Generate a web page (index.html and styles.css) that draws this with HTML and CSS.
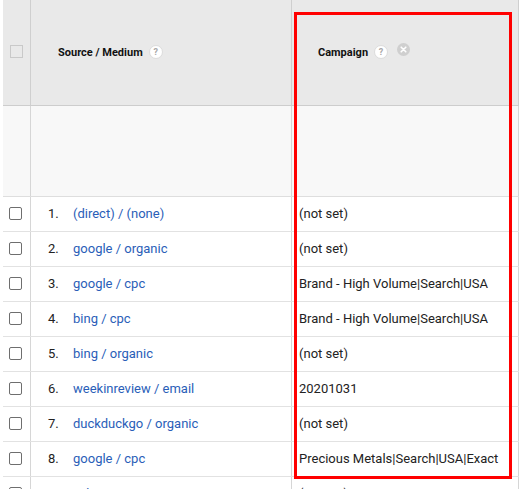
FILE: index.html
```html
<!DOCTYPE html>
<html>
<head>
<meta charset="utf-8">
<link rel="stylesheet" href="styles.css">
</head>
<body>
<div class="report">
  <div class="table">
    <div class="row head">
      <div class="cell chk"><span class="box-head"></span></div>
      <div class="cell hcell src"><span class="htext">Source / Medium</span><span class="help">?</span></div>
      <div class="cell hcell camp"><span class="htext">Campaign</span><span class="help">?</span><span class="close"><svg width="13" height="13" viewBox="0 0 13 13"><circle cx="6.5" cy="6.5" r="6.5" fill="#cfcfcf"/><path d="M4.2 4.2 L8.8 8.8 M8.8 4.2 L4.2 8.8" stroke="#fff" stroke-width="1.6" stroke-linecap="round"/></svg></span></div>
    </div>
    <div class="row sub">
      <div class="cell chk"></div>
      <div class="cell"></div>
      <div class="cell"></div>
    </div>
    <div class="row data">
      <div class="cell chk"><span class="box"></span></div>
      <div class="cell dsrc"><span class="num">1.</span><a class="link">(direct) / (none)</a></div>
      <div class="cell dcamp">(not set)</div>
    </div>
    <div class="row data">
      <div class="cell chk"><span class="box"></span></div>
      <div class="cell dsrc"><span class="num">2.</span><a class="link">google / organic</a></div>
      <div class="cell dcamp">(not set)</div>
    </div>
    <div class="row data">
      <div class="cell chk"><span class="box"></span></div>
      <div class="cell dsrc"><span class="num">3.</span><a class="link">google / cpc</a></div>
      <div class="cell dcamp">Brand - High Volume|Search|USA</div>
    </div>
    <div class="row data">
      <div class="cell chk"><span class="box"></span></div>
      <div class="cell dsrc"><span class="num">4.</span><a class="link">bing / cpc</a></div>
      <div class="cell dcamp">Brand - High Volume|Search|USA</div>
    </div>
    <div class="row data">
      <div class="cell chk"><span class="box"></span></div>
      <div class="cell dsrc"><span class="num">5.</span><a class="link">bing / organic</a></div>
      <div class="cell dcamp">(not set)</div>
    </div>
    <div class="row data">
      <div class="cell chk"><span class="box"></span></div>
      <div class="cell dsrc"><span class="num">6.</span><a class="link">weekinreview / email</a></div>
      <div class="cell dcamp">20201031</div>
    </div>
    <div class="row data">
      <div class="cell chk"><span class="box"></span></div>
      <div class="cell dsrc"><span class="num">7.</span><a class="link">duckduckgo / organic</a></div>
      <div class="cell dcamp">(not set)</div>
    </div>
    <div class="row data">
      <div class="cell chk"><span class="box"></span></div>
      <div class="cell dsrc"><span class="num">8.</span><a class="link">google / cpc</a></div>
      <div class="cell dcamp">Precious Metals|Search|USA|Exact</div>
    </div>
    <div class="row data">
      <div class="cell chk"><span class="box"></span></div>
      <div class="cell dsrc"><span class="num">9.</span><a class="link">yahoo / organic</a></div>
      <div class="cell dcamp">(not set)</div>
    </div>
  </div>
  <div class="highlight"></div>
</div>
</body>
</html>
```

FILE: styles.css
```css
* { box-sizing: border-box; }
html, body { margin: 0; padding: 0; background: #fff; }
body {
  width: 519px;
  height: 489px;
  overflow: hidden;
  font-family: Roboto, "Liberation Sans", Arial, sans-serif;
  color: #222;
}
.report { position: relative; }
.table { margin-left: 3px; width: 516px; }
.row {
  display: grid;
  grid-template-columns: 28px 261px 227px;
}
.cell {
  border-right: 1px solid #d6d6d6;
  display: flex;
  align-items: center;
  min-width: 0;
  white-space: nowrap;
  overflow: hidden;
}
.head {
  height: 106px;
  background: #e9e9e9;
  border-bottom: 1px solid #cdcdcd;
}
.head .cell { border-right-color: #cfcfcf; }
.sub {
  height: 91px;
  background: #f8f8f8;
  border-bottom: 1px solid #dedede;
}
.data {
  height: 35px;
  background: #fff;
  border-bottom: 1px solid #e2e2e2;
}
.chk { padding-left: 7px; }
.data .chk { padding-left: 6px; padding-bottom: 2px; }
.box-head {
  width: 13px;
  height: 13px;
  border: 1px solid #c9c9c9;
  background: #e9e9e9;
  margin-bottom: 2px;
}
.box {
  width: 13px;
  height: 13px;
  border: 1px solid #6e6e6e;
  border-radius: 2px;
  background: #fff;
}
.hcell { padding-bottom: 1px; }
.src { padding-left: 27px; }
.camp { padding-left: 26px; }
.htext {
  font-size: 11px;
  font-weight: 700;
  color: #111;
}
.help {
  width: 14px;
  height: 14px;
  border-radius: 50%;
  background: #fff;
  border: 1px solid #dcdcdc;
  color: #a8a8a8;
  font-size: 9px;
  font-weight: 700;
  display: flex;
  align-items: center;
  justify-content: center;
  margin-left: 6px;
}
.close {
  display: flex;
  margin-left: 9px;
  margin-bottom: 5px;
}
.dsrc { padding-left: 17px; padding-bottom: 2px; font-size: 13px; }
.num { width: 25px; color: #222; }
.link { color: #2a5eb8; text-decoration: none; }
.dcamp { padding-left: 7px; padding-bottom: 2px; font-size: 13px; color: #222; }
.highlight {
  position: absolute;
  left: 294px;
  top: 12px;
  width: 218px;
  height: 467px;
  border: 3px solid #ff0000;
  pointer-events: none;
}
```
